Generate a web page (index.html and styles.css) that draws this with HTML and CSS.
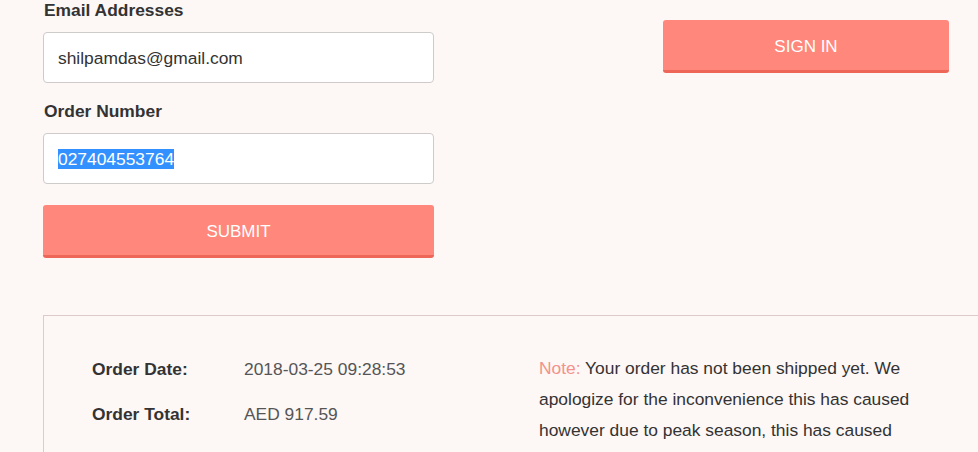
FILE: index.html
```html
<!DOCTYPE html>
<html>
<head>
<meta charset="utf-8">
<link rel="stylesheet" href="styles.css">
</head>
<body>
<div class="page">
  <div class="top">
    <form class="form">
      <div class="label">Email Addresses</div>
      <div class="field">shilpamdas@gmail.com</div>
      <div class="label label-2">Order Number</div>
      <div class="field field-2"><span class="sel">027404553764</span></div>
      <div class="btn submit">SUBMIT</div>
    </form>
    <div class="side">
      <div class="btn signin">SIGN IN</div>
    </div>
  </div>
  <div class="box">
    <div class="info">
      <div class="row"><span class="k">Order Date:</span><span class="v">2018-03-25 09:28:53</span></div>
      <div class="row"><span class="k">Order Total:</span><span class="v">AED 917.59</span></div>
    </div>
    <p class="note"><span class="note-tag">Note: </span>Your order has not been shipped yet. We apologize for the inconvenience this has caused however due to peak season, this has caused</p>
  </div>
</div>
</body>
</html>
```
FILE: styles.css
```css
html, body {
  margin: 0;
  padding: 0;
  background: #fdf7f6;
  overflow: hidden;
}
body {
  font-family: "Liberation Sans", Arial, sans-serif;
  font-size: 17.4px;
  color: #333;
  width: 978px;
  height: 452px;
}
.page {
  padding-left: 43px;
}
.top {
  display: flex;
}
.form {
  width: 391px;
  display: flex;
  flex-direction: column;
  margin: 0;
}
.label {
  font-weight: bold;
  line-height: 20px;
  color: #333;
  padding-left: 1px;
}
.label-2 {
  margin-top: 18px;
}
.field {
  margin-top: 12px;
  height: 49px;
  border: 1px solid #cfcbca;
  border-radius: 4px;
  background: #fff;
  padding-left: 14px;
  padding-top: 1px;
  box-sizing: border-box;
  height: 51px;
  display: flex;
  align-items: center;
  color: #333;
  line-height: 20px;
}
.field-2 {
  margin-top: 12px;
}
.sel {
  background: #3390ff;
  color: #fff;
  line-height: 20px;
}
.btn {
  background: #ff877b;
  border-bottom: 3px solid #ee6658;
  border-radius: 3px;
  color: #fff;
  box-sizing: border-box;
  height: 53px;
  padding-top: 3px;
  display: flex;
  align-items: center;
  justify-content: center;
  font-size: 17px;
}
.submit {
  margin-top: 21px;
}
.side {
  margin-left: 229px;
  padding-top: 20px;
}
.signin {
  width: 286px;
}
.box {
  margin-top: 57px;
  width: 960px;
  height: 150px;
  border: 1px solid #dccbc9;
  display: flex;
}
.info {
  width: 447px;
  padding-left: 48px;
  padding-top: 43px;
  display: flex;
  flex-direction: column;
  gap: 25px;
}
.row {
  display: flex;
  line-height: 20px;
}
.k {
  width: 152px;
  font-weight: bold;
  color: #333;
}
.v {
  color: #555;
}
.note {
  margin: 0;
  width: 400px;
  padding-top: 37px;
  line-height: 31px;
  color: #333;
}
.note-tag {
  color: #f3928b;
}
```
